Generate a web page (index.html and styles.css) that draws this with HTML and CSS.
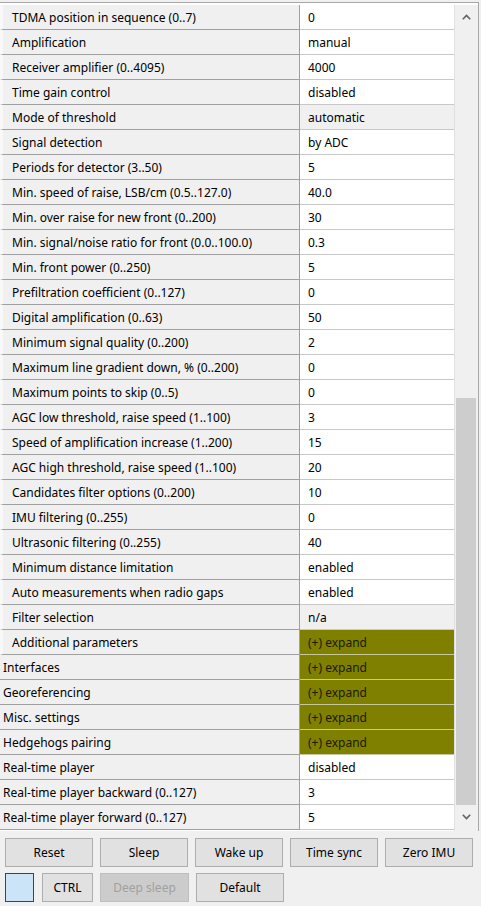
FILE: index.html
```html
<!DOCTYPE html>
<html>
<head>
<meta charset="utf-8">
<link rel="stylesheet" href="styles.css">
</head>
<body>
<div class="grid">
  <div class="rows">
    <div class="row"><div class="name ind">TDMA position in sequence (0..7)</div><div class="val">0</div></div>
    <div class="row"><div class="name ind">Amplification</div><div class="val">manual</div></div>
    <div class="row"><div class="name ind">Receiver amplifier (0..4095)</div><div class="val">4000</div></div>
    <div class="row"><div class="name ind">Time gain control</div><div class="val">disabled</div></div>
    <div class="row"><div class="name ind">Mode of threshold</div><div class="val ro">automatic</div></div>
    <div class="row"><div class="name ind">Signal detection</div><div class="val">by ADC</div></div>
    <div class="row"><div class="name ind">Periods for detector (3..50)</div><div class="val">5</div></div>
    <div class="row"><div class="name ind">Min. speed of raise, LSB/cm (0.5..127.0)</div><div class="val">40.0</div></div>
    <div class="row"><div class="name ind">Min. over raise for new front (0..200)</div><div class="val">30</div></div>
    <div class="row"><div class="name ind">Min. signal/noise ratio for front (0.0..100.0)</div><div class="val">0.3</div></div>
    <div class="row"><div class="name ind">Min. front power (0..250)</div><div class="val">5</div></div>
    <div class="row"><div class="name ind">Prefiltration coefficient (0..127)</div><div class="val">0</div></div>
    <div class="row"><div class="name ind">Digital amplification (0..63)</div><div class="val">50</div></div>
    <div class="row"><div class="name ind">Minimum signal quality (0..200)</div><div class="val">2</div></div>
    <div class="row"><div class="name ind">Maximum line gradient down, % (0..200)</div><div class="val">0</div></div>
    <div class="row"><div class="name ind">Maximum points to skip (0..5)</div><div class="val">0</div></div>
    <div class="row"><div class="name ind">AGC low threshold, raise speed (1..100)</div><div class="val">3</div></div>
    <div class="row"><div class="name ind">Speed of amplification increase (1..200)</div><div class="val">15</div></div>
    <div class="row"><div class="name ind">AGC high threshold, raise speed (1..100)</div><div class="val">20</div></div>
    <div class="row"><div class="name ind">Candidates filter options (0..200)</div><div class="val">10</div></div>
    <div class="row"><div class="name ind">IMU filtering (0..255)</div><div class="val">0</div></div>
    <div class="row"><div class="name ind">Ultrasonic filtering (0..255)</div><div class="val">40</div></div>
    <div class="row"><div class="name ind">Minimum distance limitation</div><div class="val">enabled</div></div>
    <div class="row"><div class="name ind">Auto measurements when radio gaps</div><div class="val">enabled</div></div>
    <div class="row"><div class="name ind">Filter selection</div><div class="val ro">n/a</div></div>
    <div class="row"><div class="name ind">Additional parameters</div><div class="val exp">(+) expand</div></div>
    <div class="row"><div class="name">Interfaces</div><div class="val exp">(+) expand</div></div>
    <div class="row"><div class="name">Georeferencing</div><div class="val exp">(+) expand</div></div>
    <div class="row"><div class="name">Misc. settings</div><div class="val exp">(+) expand</div></div>
    <div class="row"><div class="name">Hedgehogs pairing</div><div class="val exp">(+) expand</div></div>
    <div class="row"><div class="name">Real-time player</div><div class="val">disabled</div></div>
    <div class="row"><div class="name">Real-time player backward (0..127)</div><div class="val">3</div></div>
    <div class="row"><div class="name">Real-time player forward (0..127)</div><div class="val">5</div></div>
  </div>
  <div class="scroll">
    <div class="arrow"><svg width="9" height="6" viewBox="0 0 9 6"><path d="M0.8 5.2 L4.5 1.5 L8.2 5.2" fill="none" stroke="#606060" stroke-width="1.6"/></svg></div>
    <div class="track">
      <div class="spacer"></div>
      <div class="thumb"></div>
    </div>
    <div class="arrow"><svg width="9" height="6" viewBox="0 0 9 6"><path d="M0.8 0.8 L4.5 4.5 L8.2 0.8" fill="none" stroke="#606060" stroke-width="1.6"/></svg></div>
  </div>
</div>
<div class="buttons">
  <div class="brow">
    <div class="btn">Reset</div>
    <div class="btn">Sleep</div>
    <div class="btn">Wake up</div>
    <div class="btn">Time sync</div>
    <div class="btn">Zero IMU</div>
  </div>
  <div class="brow">
    <div class="btn sq"></div>
    <div class="btn ctrl">CTRL</div>
    <div class="btn dis">Deep sleep</div>
    <div class="btn">Default</div>
  </div>
</div>
</body>
</html>
```

FILE: styles.css
```css
* { box-sizing: border-box; }
html, body { margin: 0; padding: 0; }
body {
  width: 481px;
  height: 906px;
  background: #f0f0f0;
  font-family: "Noto Sans", "Segoe UI", sans-serif;
  font-size: 12px;
  color: #000;
  overflow: hidden;
}
.grid {
  margin-top: 2px;
  width: 479px;
  height: 829px;
  border-top: 1px solid #a8a8a8;
  border-right: 1px solid #a8a8a8;
  background: #ffffff;
  display: flex;
  padding-top: 2px;
}
.rows {
  width: 454px;
  display: flex;
  flex-direction: column;
}
.row {
  display: flex;
  height: 25px;
}
.name {
  width: 300px;
  background: #f0f0f0;
  border-bottom: 1px solid #a0a0a0;
  border-right: 1px solid #a0a0a0;
  padding: 1px 0 0 3px;
  line-height: 23px;
  white-space: nowrap;
  overflow: hidden;
}
.name.ind {
  border-left: 3px solid #f8f8f8;
  padding-left: 9px;
}
.val {
  flex: 1;
  background: #fff;
  border-bottom: 1px solid #c8c8c8;
  padding: 1px 0 0 8px;
  line-height: 23px;
  white-space: nowrap;
}
.val.ro { background: #f0f0f0; }
.val.exp {
  background: #808000;
  border-bottom: 1px solid #c8c8a0;
  color: #1a1a00;
}
.scroll {
  flex: 1;
  display: flex;
  flex-direction: column;
  background: #f0f0f0;
  border-left: 1px solid #e0e0e0;
  padding-bottom: 2px;
}
.arrow {
  height: 24px;
  display: flex;
  align-items: center;
  justify-content: center;
}
.track {
  flex: 1;
  display: flex;
  flex-direction: column;
  padding: 0 2px 0 1px;
}
.spacer { height: 369px; }
.thumb {
  flex: 1;
  background: #cdcdcd;
}
.buttons {
  padding: 7px 0 0 5px;
  display: flex;
  flex-direction: column;
  gap: 6px;
}
.brow {
  display: flex;
  gap: 7px;
}
.btn {
  width: 88px;
  height: 29px;
  background: #e1e1e1;
  border: 1px solid #adadad;
  display: flex;
  align-items: center;
  justify-content: center;
  font-size: 12px;
  color: #000;
}
.btn.sq {
  width: 29px;
  background: #cce4f7;
  border-color: #005499;
}
.btn.ctrl { width: 51px; margin-left: 1px; }
.btn.dis {
  width: 89px;
  background: #cccccc;
  border-color: #bfbfbf;
  color: #a0a0a0;
}
```
